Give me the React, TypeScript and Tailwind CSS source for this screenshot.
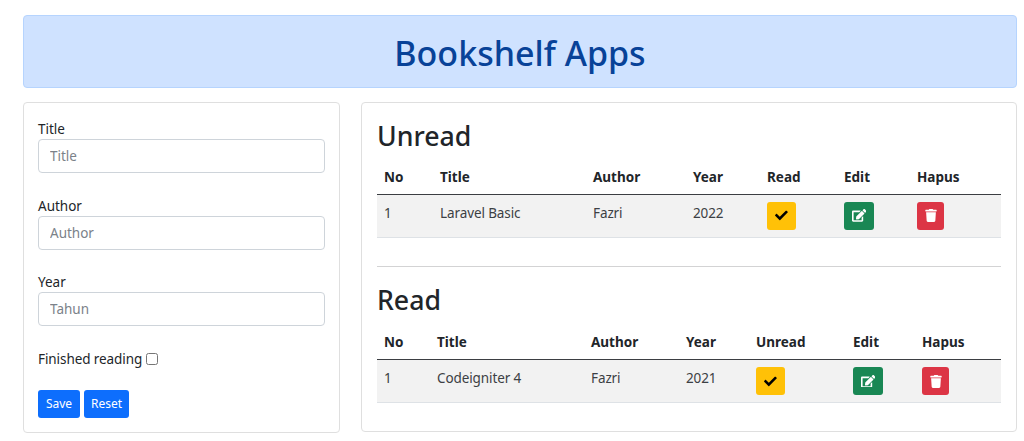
import { useState } from "react";
import { FaCheck, FaEdit, FaTrash } from "react-icons/fa";

type Book = { id: number; title: string; author: string; year: number };

const UNREAD: Book[] = [{ id: 1, title: "Laravel Basic", author: "Fazri", year: 2022 }];
const READ: Book[] = [{ id: 2, title: "Codeigniter 4", author: "Fazri", year: 2021 }];

const FIELDS = [
  { name: "title", label: "Title", placeholder: "Title" },
  { name: "author", label: "Author", placeholder: "Author" },
  { name: "year", label: "Year", placeholder: "Tahun" },
];

const BTN = "flex h-7 items-center justify-center rounded-[3px]";

function BookTable({ books, action, cols }: { books: Book[]; action: string; cols: string[] }) {
  return (
    <table className="w-full table-fixed border-collapse text-left">
      <colgroup>
        {cols.map((c, i) => <col key={i} className={c} />)}
      </colgroup>
      <thead>
        <tr className="h-[36px] border-b border-[#3b3e42]">
          {["No", "Title", "Author", "Year", action, "Edit", "Hapus"].map(h => (
            <th key={h} className="px-[7px] pt-0.5 text-[13.5px] leading-5 font-bold">{h}</th>
          ))}
        </tr>
      </thead>
      <tbody>
        {books.map((b, i) => (
          <tr key={b.id} className="h-[43px] border-b border-[#dee2e6] bg-[#f2f2f2] align-top tracking-[-0.1px] text-[#3c4044]">
            <td className="px-[7px] pt-2">{i + 1}</td>
            <td className="px-[7px] pt-2">{b.title}</td>
            <td className="px-[7px] pt-2">{b.author}</td>
            <td className="px-[7px] pt-2">{b.year}</td>
            <td className="px-[7px] pt-[7px]">
              <button className={`${BTN} w-[28.5px] bg-[#ffc107] text-black`}><FaCheck size={12.8} /></button>
            </td>
            <td className="px-[7px] pt-[7px]">
              <button className={`${BTN} w-[30px] bg-[#198754] text-white`}><FaEdit className="h-[12.8px] w-[14.4px]" /></button>
            </td>
            <td className="px-[7px] pt-[7px]">
              <button className={`${BTN} w-[27px] bg-[#dc3545] text-white`}><FaTrash className="h-[13px] w-[12px]" /></button>
            </td>
          </tr>
        ))}
      </tbody>
    </table>
  );
}

export default function App() {
  const [finished, setFinished] = useState(false);

  return (
    <div className="h-[441px] overflow-hidden bg-white pt-[15px] pr-[7px] pl-[23px] font-['Noto_Sans',sans-serif] text-[13.5px] leading-5 text-[#212529]">
      <header className="flex h-[73px] items-center justify-center rounded border border-[#b6d4fe] bg-[#cfe2ff]">
        <h1 className="pt-0.5 text-[34px] leading-10 font-medium text-[#084298]">Bookshelf Apps</h1>
      </header>

      <main className="mt-[14px] flex items-start gap-[21px]">
        {/* Form */}
        <form className="h-[331px] w-[317px] shrink-0 rounded border border-[#dfdfdf] px-[14px] pt-4" onSubmit={e => e.preventDefault()} onReset={() => setFinished(false)}>
          {FIELDS.map(f => (
            <div key={f.name} className="mb-[22.6px]">
              <label htmlFor={f.name} className="block h-5">{f.label}</label>
              <input id={f.name} placeholder={f.placeholder}
                className="block h-[34px] w-full rounded border border-[#ced4da] px-[11px] placeholder:text-[#7b8289]" />
            </div>
          ))}
          <div className="flex h-5 items-center gap-1">
            <label htmlFor="finished" className="tracking-[-0.08px]">Finished reading</label>
            <input id="finished" type="checkbox" className="size-3" checked={finished} onChange={e => setFinished(e.target.checked)} />
          </div>
          <div className="mt-[21.2px] flex gap-1 text-[12px] text-white">
            <button type="submit" className={`${BTN} w-[42px] bg-[#0d6efd]`}>Save</button>
            <button type="reset" className={`${BTN} w-[45px] bg-[#0d6efd]`}>Reset</button>
          </div>
        </form>

        {/* Shelves */}
        <section className="h-[330px] flex-1 rounded border border-[#dfdfdf] px-[15px] pt-[15px]">
          <h2 className="h-[40px] text-[26.7px] leading-9 font-medium">Unread</h2>
          <BookTable books={UNREAD} action="Read" cols={["w-[56px]", "w-[153px]", "w-[100px]", "w-[74px]", "w-[77px]", "w-[73px]", "w-[91px]"]} />
          <hr className="mt-[28px] mb-[15px] border-[#d3d3d4]" />
          <h2 className="h-[42px] text-[26.7px] leading-9 font-medium">Read</h2>
          <BookTable books={READ} action="Unread" cols={["w-[53px]", "w-[154px]", "w-[95px]", "w-[70px]", "w-[97px]", "w-[69px]", "w-[86px]"]} />
        </section>
      </main>
    </div>
  );
}
